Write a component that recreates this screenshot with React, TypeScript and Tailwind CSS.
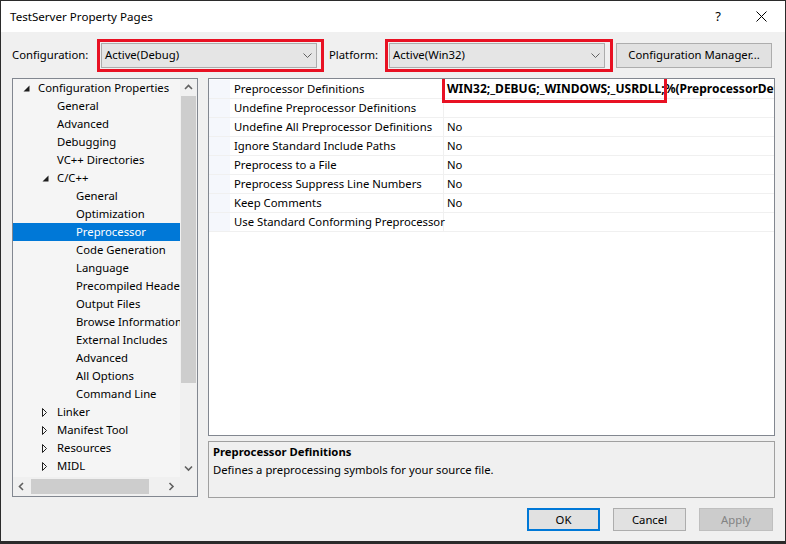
import React from "react";

type Node = { t: string; l: number; e?: "open" | "closed"; sel?: boolean };

const tree: Node[] = [
  { t: "Configuration Properties", l: 0, e: "open" },
  { t: "General", l: 1 },
  { t: "Advanced", l: 1 },
  { t: "Debugging", l: 1 },
  { t: "VC++ Directories", l: 1 },
  { t: "C/C++", l: 1, e: "open" },
  { t: "General", l: 2 },
  { t: "Optimization", l: 2 },
  { t: "Preprocessor", l: 2, sel: true },
  { t: "Code Generation", l: 2 },
  { t: "Language", l: 2 },
  { t: "Precompiled Headers", l: 2 },
  { t: "Output Files", l: 2 },
  { t: "Browse Information", l: 2 },
  { t: "External Includes", l: 2 },
  { t: "Advanced", l: 2 },
  { t: "All Options", l: 2 },
  { t: "Command Line", l: 2 },
  { t: "Linker", l: 1, e: "closed" },
  { t: "Manifest Tool", l: 1, e: "closed" },
  { t: "Resources", l: 1, e: "closed" },
  { t: "MIDL", l: 1, e: "closed" },
];

const props: [string, string][] = [
  ["Preprocessor Definitions", ""],
  ["Undefine Preprocessor Definitions", ""],
  ["Undefine All Preprocessor Definitions", "No"],
  ["Ignore Standard Include Paths", "No"],
  ["Preprocess to a File", "No"],
  ["Preprocess Suppress Line Numbers", "No"],
  ["Keep Comments", "No"],
  ["Use Standard Conforming Preprocessor", ""],
];

const indent = ["pl-0", "pl-[19px]", "pl-[38px]"];

function Chevron({ dir }: { dir: "up" | "down" | "left" | "right" }) {
  const d = {
    up: "M1 5 L4.5 1.5 L8 5",
    down: "M1 1.5 L4.5 5 L8 1.5",
    left: "M5 1 L1.5 4.5 L5 8",
    right: "M1.5 1 L5 4.5 L1.5 8",
  }[dir];
  const vert = dir === "up" || dir === "down";
  return (
    <svg width={vert ? 9 : 7} height={vert ? 7 : 9} viewBox={vert ? "0 0 9 7" : "0 0 7 9"}>
      <path d={d} fill="none" stroke="#606060" strokeWidth="1.6" />
    </svg>
  );
}

function Expander({ e }: { e?: "open" | "closed" }) {
  if (e === "open")
    return (
      <svg width="7" height="7" viewBox="0 0 7 7">
        <polygon points="6.5,0.5 6.5,6.5 0.5,6.5" fill="#1e1e1e" />
      </svg>
    );
  if (e === "closed")
    return (
      <svg width="6" height="9" viewBox="0 0 6 9">
        <polygon points="0.5,0.5 4.5,4.5 0.5,8.5" fill="none" stroke="#1e1e1e" strokeWidth="1" />
      </svg>
    );
  return null;
}

function Combo({ text, w }: { text: string; w: string }) {
  return (
    <div className={`${w} h-[25px] bg-[#e5e5e5] border border-[#acacac] flex items-center pl-[3px] pr-[4px]`}>
      <span className="flex-1">{text}</span>
      <svg width="9" height="5" viewBox="0 0 9 5">
        <path d="M0.5 0.5 L4.5 4.5 L8.5 0.5" fill="none" stroke="#606060" strokeWidth="1" />
      </svg>
    </div>
  );
}

export default function App() {
  return (
    <div
      className="w-[786px] h-[544px] bg-[#2b2b2b] flex flex-col text-[11.3px] text-[#000] leading-none"
      style={{ fontFamily: '"Segoe UI", "Noto Sans", sans-serif' }}
    >
      <div className="flex-1 mx-px mt-px mb-[3px] bg-[#f0f0f0] flex flex-col">
        {/* title bar */}
        <div className="h-[31px] bg-white flex items-center pl-[9px]">
          <span className="flex-1 text-[11.6px]">TestServer Property Pages</span>
          <span className="w-[14px] text-center text-[13px] mr-[31px]">?</span>
          <svg width="11" height="11" viewBox="0 0 11 11" className="mr-[18px]">
            <path d="M0.5 0.5 L10.5 10.5 M10.5 0.5 L0.5 10.5" stroke="#000" strokeWidth="1" />
          </svg>
        </div>

        {/* configuration toolbar */}
        <div className="h-[46px] flex items-center pl-[11px]">
          <span className="w-[85px]">Configuration:</span>
          <div className="border-[3px] border-[#e81123] pt-px pb-px pl-px pr-[4px]">
            <Combo text="Active(Debug)" w="w-[216px]" />
          </div>
          <span className="ml-[5px] w-[56px]">Platform:</span>
          <div className="border-[3px] border-[#e81123] pt-px pb-px pl-px pr-[5px]">
            <Combo text="Active(Win32)" w="w-[216px]" />
          </div>
          <button className="ml-[3px] w-[156px] h-[25px] bg-[#e1e1e1] border border-[#adadad]">Configuration Manager...</button>
        </div>

        {/* main area */}
        <div className="h-[420px] flex pl-[11px]">
          {/* tree */}
          <div className="w-[186px] h-[419px] border border-[#828790] bg-[#f0f0f0] flex flex-col">
            <div className="h-[398px] flex">
              <div className="w-[167px] bg-[#f5f5f5] overflow-hidden">
                {tree.map((n, i) => (
                  <div
                    key={i}
                    className={`h-[18px] flex items-center whitespace-nowrap ${indent[n.l]} ${n.sel ? "bg-[#0078d7] text-white" : ""}`}
                  >
                    <span className="w-[25px] shrink-0 flex items-center pl-[10px]">
                      <Expander e={n.e} />
                    </span>
                    <span>{n.t}</span>
                  </div>
                ))}
              </div>
              <div className="w-[17px] flex flex-col items-center">
                <div className="h-[17px] flex items-center justify-center">
                  <Chevron dir="up" />
                </div>
                <div className="w-[15px] h-[287px] bg-[#cdcdcd]" />
                <div className="flex-1" />
                <div className="h-[17px] flex items-center justify-center">
                  <Chevron dir="down" />
                </div>
              </div>
            </div>
            <div className="h-[19px] flex">
              <div className="w-[167px] flex items-center">
                <div className="w-[17px] flex justify-center">
                  <Chevron dir="left" />
                </div>
                <div className="ml-px w-[118px] h-[15px] bg-[#cdcdcd]" />
                <div className="flex-1" />
                <div className="w-[17px] flex justify-center">
                  <Chevron dir="right" />
                </div>
              </div>
            </div>
          </div>

          {/* right column */}
          <div className="ml-[10px] w-[567px] flex flex-col">
            <div className="h-[358px] border border-[#828790] bg-white pt-px overflow-hidden">
              {props.map(([name, value], i) => (
                <div key={i} className="h-[19px] flex border-b border-[#f0f0f0]">
                  <div className="w-[21px] shrink-0 bg-[#f5f7fc]" />
                  <div className="w-[214px] shrink-0 pl-[4px] flex items-center whitespace-nowrap border-r border-[#f0f0f0]">{name}</div>
                  <div className="flex-1 pl-[3px] flex items-center whitespace-nowrap">
                    {i === 0 ? (
                      <span className="font-bold text-[12px]">
                        <span className="relative">
                          WIN32;_DEBUG;_WINDOWS;_USRDLL;
                          <span className="absolute z-10 -left-[5px] -right-[2px] -top-[4px] -bottom-[6px] border-[3px] border-[#e81123]" />
                        </span>
                        %(PreprocessorDefinitions)
                      </span>
                    ) : (
                      value
                    )}
                  </div>
                </div>
              ))}
            </div>
            <div className="mt-[5px] h-[57px] border border-[#a0a0a0] px-[4px] pt-px">
              <div className="font-bold h-[18px] flex items-center">Preprocessor Definitions</div>
              <div className="h-[18px] flex items-center">Defines a preprocessing symbols for your source file.</div>
            </div>
          </div>
        </div>

        {/* buttons */}
        <div className="mt-[10px] h-[23px] flex justify-end pr-[12px] gap-[13px]">
          <button className="w-[73px] h-[23px] bg-[#e1e1e1] border-2 border-[#0078d7]">OK</button>
          <button className="w-[73px] h-[23px] bg-[#e1e1e1] border border-[#adadad]">Cancel</button>
          <button className="w-[74px] h-[23px] bg-[#cccccc] border border-[#bfbfbf] text-[#838383]">Apply</button>
        </div>
      </div>
    </div>
  );
}
